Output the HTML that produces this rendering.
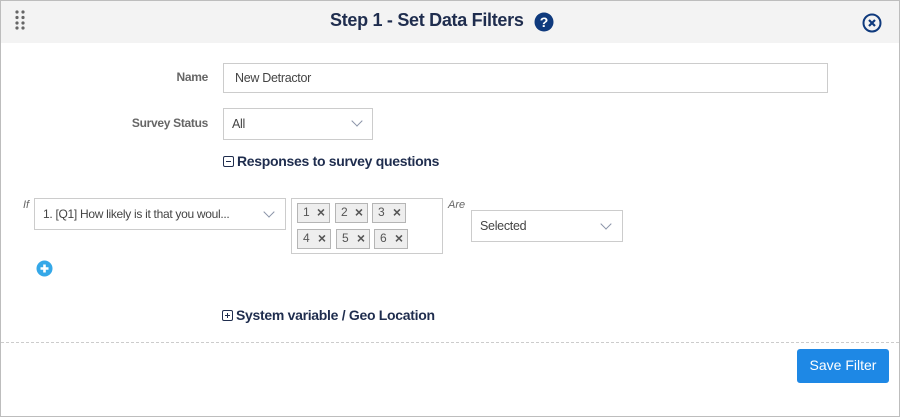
<!DOCTYPE html>
<html><head><style>
*{box-sizing:border-box;margin:0;padding:0}
body{width:900px;height:417px;background:#fff;font-family:"Liberation Sans",sans-serif;position:relative;overflow:hidden}
.frame{position:absolute;left:0;top:0;width:900px;height:417px;border:1px solid #bdbdbd}
.hdr{position:absolute;left:1px;top:1px;width:898px;height:42px;background:#f3f3f3}
.a{position:absolute}
.title{left:330px;top:10px;font-size:18px;font-weight:bold;color:#1f2d4e;letter-spacing:-0.3px}
.lbl{font-size:12px;font-weight:bold;color:#666;text-align:right;letter-spacing:-0.3px}
.box{border:1px solid #ccc;background:#fff;font-size:12.5px;color:#444;letter-spacing:-0.3px}
.chev{position:absolute;width:8px;height:8px;border-right:1px solid #8a93a8;border-bottom:1px solid #8a93a8;transform:rotate(45deg)}
.sec{font-size:14px;font-weight:bold;color:#1f2d4e;letter-spacing:-0.3px}
.tag{position:absolute;height:20px;border:1px solid #b5b5b5;background:#eee;font-size:12px;color:#555;padding:1px 0 0 5px}
.tag b{position:absolute;right:4px;top:0;font-size:14px;color:#555}
.sq{display:inline-block;width:11px;height:11px;border:1.3px solid #1f2d4e;border-radius:2px;position:relative;vertical-align:-1px;margin-right:3px}
</style></head><body>
<div class="frame"></div>
<div class="hdr"></div>
<svg class="a" style="left:15px;top:10px" width="12" height="22"><g fill="#666"><circle cx="2" cy="2" r="1.6"/><circle cx="8" cy="2" r="1.6"/><circle cx="2" cy="7.5" r="1.6"/><circle cx="8" cy="7.5" r="1.6"/><circle cx="2" cy="13" r="1.6"/><circle cx="8" cy="13" r="1.6"/><circle cx="2" cy="18" r="1.6"/><circle cx="8" cy="18" r="1.6"/></g></svg>
<div class="a title">Step 1 - Set Data Filters</div>
<svg class="a" style="left:534px;top:12px" width="20" height="20"><circle cx="10" cy="10" r="9.5" fill="#0f3a7d"/><text x="10" y="15" text-anchor="middle" font-size="14" font-weight="bold" fill="#fff" font-family="Liberation Sans">?</text></svg>
<svg class="a" style="left:862px;top:13px" width="20" height="20"><circle cx="10" cy="10" r="8.5" fill="none" stroke="#0f3a7d" stroke-width="2"/><path d="M7 7L13 13M13 7L7 13" stroke="#0f3a7d" stroke-width="2.2"/></svg>

<div class="a lbl" style="left:100px;top:70px;width:108px">Name</div>
<div class="a box" style="left:223px;top:63px;width:605px;height:30px;padding:7px 0 0 11px">New Detractor</div>
<div class="a lbl" style="left:100px;top:116px;width:108px">Survey Status</div>
<div class="a box" style="left:223px;top:108px;width:150px;height:32px;padding:8px 0 0 8px">All<span class="chev" style="left:129px;top:8px"></span></div>
<div class="a sec" style="left:223px;top:153px"><span class="sq"><span class="a" style="left:2px;top:3.5px;width:5px;height:1.3px;background:#1f2d4e"></span></span>Responses to survey questions</div>

<div class="a" style="left:23px;top:199px;font-size:11px;font-style:italic;color:#666">If</div>
<div class="a box" style="left:34px;top:198px;width:252px;height:32px;padding:8px 0 0 8px;font-size:12px">1. [Q1] How likely is it that you woul...<span class="chev" style="left:230px;top:9px"></span></div>
<div class="a box" style="left:291px;top:198px;width:152px;height:56px"></div>
<div class="tag" style="left:297px;top:203px;width:33px">1<b>×</b></div>
<div class="tag" style="left:335px;top:203px;width:33px">2<b>×</b></div>
<div class="tag" style="left:372px;top:203px;width:34px">3<b>×</b></div>
<div class="tag" style="left:297px;top:229px;width:34px">4<b>×</b></div>
<div class="tag" style="left:336px;top:229px;width:34px">5<b>×</b></div>
<div class="tag" style="left:374px;top:229px;width:34px">6<b>×</b></div>
<div class="a" style="left:448px;top:199px;font-size:11px;font-style:italic;color:#666">Are</div>
<div class="a box" style="left:471px;top:210px;width:152px;height:32px;padding:8px 0 0 8px">Selected<span class="chev" style="left:130px;top:9px"></span></div>
<svg class="a" style="left:36px;top:260px" width="17" height="17"><circle cx="8.5" cy="8.5" r="8" fill="#35a8e8"/><path d="M8.5 4.5V12.5M4.5 8.5H12.5" stroke="#fff" stroke-width="2.6"/></svg>
<div class="a sec" style="left:222px;top:307px"><span class="sq"><span class="a" style="left:2px;top:3.5px;width:5px;height:1.3px;background:#1f2d4e"></span><span class="a" style="left:3.8px;top:1.7px;width:1.3px;height:5px;background:#1f2d4e"></span></span>System variable / Geo Location</div>

<div class="a" style="left:1px;top:342px;width:898px;border-top:1px dashed #ccc"></div>
<div class="a" style="left:797px;top:349px;width:92px;height:34px;background:#1e88e5;border-radius:3px;color:#fff;font-size:14px;text-align:center;line-height:33px">Save Filter</div>
</body></html>
